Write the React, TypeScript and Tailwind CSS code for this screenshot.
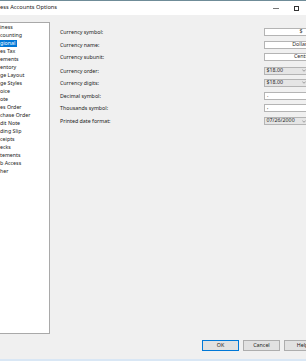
import React from "react";

// Visible slice of the options tree (window is cropped at the left edge)
const treeItems = [
  "iness",
  "counting",
  "gional",
  "es Tax",
  "ements",
  "entory",
  "ge Layout",
  "ge Styles",
  "oice",
  "ote",
  "es Order",
  "chase Order",
  "dit Note",
  "ding Slip",
  "ceipts",
  "ecks",
  "tements",
  "b Access",
  "her",
];

type Field = {
  label: string;
  kind: "text" | "select" | "symbol";
  value: string;
  gap: string; // spacing above the row
};

const fields: Field[] = [
  { label: "Currency symbol:", kind: "text", value: "$", gap: "mt-[13px]" },
  { label: "Currency name:", kind: "text", value: "Dollars", gap: "mt-[4.5px]" },
  { label: "Currency subunit:", kind: "text", value: "Cents", gap: "mt-[4px]" },
  { label: "Currency order:", kind: "select", value: "$18.00", gap: "mt-[6px]" },
  { label: "Currency digits:", kind: "select", value: "$18.00", gap: "mt-[4px]" },
  { label: "Decimal symbol:", kind: "symbol", value: ".", gap: "mt-[5px]" },
  { label: "Thousands symbol:", kind: "symbol", value: ",", gap: "mt-[4.5px]" },
  { label: "Printed date format:", kind: "select", value: "07/26/2000", gap: "mt-[5px]" },
];

function Chevron() {
  return (
    <svg width="4" height="3" viewBox="0 0 8 5" className="shrink-0">
      <path d="M0.5 0.5 L4 4 L7.5 0.5" fill="none" stroke="#555" strokeWidth="1" />
    </svg>
  );
}

function FieldBox({ field }: { field: Field }) {
  if (field.kind === "select") {
    return (
      <div className="flex h-[8px] w-[47px] shrink-0 items-center justify-between border border-[#b4b4b4] bg-[#e5e5e5] pl-[1.5px] pr-[4px] text-[5.3px] leading-none text-[#2a2a2a]">
        <span>{field.value}</span>
        <Chevron />
      </div>
    );
  }
  if (field.kind === "symbol") {
    return (
      <div className="flex h-[8px] w-[80px] shrink-0 items-end border border-[#b4b4b4] bg-white pb-[0.5px] pl-[2px] text-[5.3px] leading-none text-[#2a2a2a]">
        <span>{field.value}</span>
      </div>
    );
  }
  return (
    <div className="flex h-[8px] w-[74px] shrink-0 items-center justify-center border border-[#b4b4b4] bg-white text-[5.3px] leading-none text-[#2a2a2a]">
      <span>{field.value}</span>
    </div>
  );
}

export default function App() {
  return (
    <div className="relative flex h-[361px] w-[306px] flex-col overflow-hidden bg-[#f0f0f0] font-['Noto_Sans','Open_Sans',sans-serif] text-[#1a1a1a]">
      {/* Title bar */}
      <div className="flex h-[15px] shrink-0 items-center border-t border-[#6f8c98] bg-white">
        <span className="whitespace-nowrap text-[5.7px] leading-none text-[#1a1a1a]">ess Accounts Options</span>
        <div className="ml-auto flex items-center gap-[15px] pr-[7px]">
          <div className="h-px w-[6px] bg-[#777]" />
          <div className="h-[5px] w-[5px] border border-[#333]" />
        </div>
      </div>

      {/* Body */}
      <div className="flex flex-1">
        {/* Options tree */}
        <div className="mt-[7px] flex h-[312px] w-[50px] shrink-0 flex-col border-r border-b border-t border-[#a9a9a9] bg-white pt-[0.5px]">
          {treeItems.map((item) => (
            <div key={item} className="flex h-[8px] items-center">
              <span
                className={
                  item === "gional"
                    ? "whitespace-nowrap bg-[#0078d7] pr-[1.5px] text-[5.3px] leading-[6.5px] text-white"
                    : "whitespace-nowrap text-[5.3px] leading-[6.5px] text-[#1a1a1a]"
                }
              >
                {item}
              </span>
            </div>
          ))}
        </div>

        {/* Regional settings */}
        <div className="flex flex-1 flex-col pl-[10px]">
          {fields.map((f) => (
            <div key={f.label} className={`flex h-[8px] items-center ${f.gap}`}>
              <span className="w-[204px] shrink-0 translate-y-[0.5px] whitespace-nowrap text-[5.3px] leading-none text-[#1a1a1a]">
                {f.label}
              </span>
              <FieldBox field={f} />
            </div>
          ))}

          {/* Dialog buttons */}
          <div className="mt-auto mb-[8px] flex gap-[4px] pl-[142px]">
            <button className="flex h-[11px] w-[37px] shrink-0 items-center justify-center border border-[#0078d7] bg-[#e1e1e1] text-[5.3px] leading-none text-[#1a1a1a]">
              OK
            </button>
            <button className="flex h-[11px] w-[37px] shrink-0 items-center justify-center border border-[#adadad] bg-[#e1e1e1] text-[5.3px] leading-none text-[#1a1a1a]">
              Cancel
            </button>
            <button className="flex h-[11px] w-[37px] shrink-0 items-center justify-center border border-[#adadad] bg-[#e1e1e1] text-[5.3px] leading-none text-[#1a1a1a]">
              Help
            </button>
          </div>
        </div>
      </div>

      {/* Window bottom edge */}
      <div className="h-[2px] shrink-0 bg-[#d9e7f5]" />
    </div>
  );
}
